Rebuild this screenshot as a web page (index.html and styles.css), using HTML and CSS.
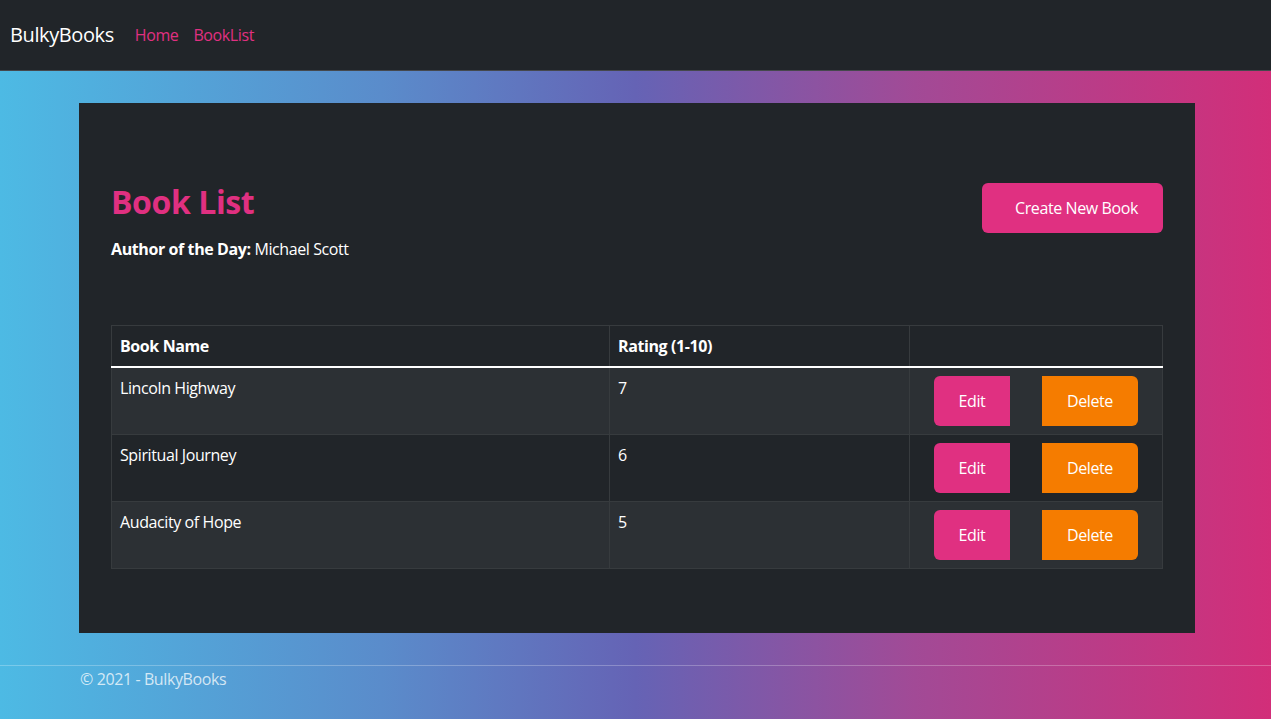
FILE: index.html
```html
<!DOCTYPE html>
<html lang="en">
<head>
<meta charset="utf-8">
<title>Book List - BulkyBooks</title>
<link rel="stylesheet" href="styles.css">
</head>
<body>
<header class="navbar">
  <a class="brand" href="#">BulkyBooks</a>
  <nav class="nav">
    <a class="nav-link" href="#">Home</a>
    <a class="nav-link" href="#">BookList</a>
  </nav>
</header>
<main class="page">
  <section class="card">
    <div class="card-head">
      <div class="titles">
        <h2 class="title">Book List</h2>
        <p class="author"><strong>Author of the Day:</strong> Michael Scott</p>
      </div>
      <a class="btn btn-create" href="#">Create New Book</a>
    </div>
    <table class="table">
      <thead>
        <tr>
          <th class="c-name">Book Name</th>
          <th class="c-rating">Rating (1-10)</th>
          <th class="c-act"></th>
        </tr>
      </thead>
      <tbody>
        <tr class="odd">
          <td>Lincoln Highway</td>
          <td>7</td>
          <td><div class="actions"><a class="btn btn-edit" href="#">Edit</a><a class="btn btn-delete" href="#">Delete</a></div></td>
        </tr>
        <tr>
          <td>Spiritual Journey</td>
          <td>6</td>
          <td><div class="actions"><a class="btn btn-edit" href="#">Edit</a><a class="btn btn-delete" href="#">Delete</a></div></td>
        </tr>
        <tr class="odd">
          <td>Audacity of Hope</td>
          <td>5</td>
          <td><div class="actions"><a class="btn btn-edit" href="#">Edit</a><a class="btn btn-delete" href="#">Delete</a></div></td>
        </tr>
      </tbody>
    </table>
  </section>
</main>
<footer class="footer">
  <div class="footer-inner">&copy; 2021 - BulkyBooks</div>
</footer>
</body>
</html>
```

FILE: styles.css
```css
* { box-sizing: border-box; }
html, body { height: 100%; }
body {
  margin: 0;
  font-family: "Open Sans", "Noto Sans", sans-serif;
  font-size: 16px;
  line-height: 24px;
  letter-spacing: -0.025em;
  color: #fff;
  background: linear-gradient(to right, #4dbae4 0%, #5a8ccb 30%, #6563b5 50%, #a24a96 72%, #d22e79 100%);
  overflow: hidden;
}
a { text-decoration: none; }

.navbar {
  height: 71px;
  background: #212529;
  border-bottom: 1px solid #45484d;
  display: flex;
  align-items: center;
  padding: 0 10px;
}
.brand {
  color: #fff;
  font-size: 20px;
  line-height: 30px;
  margin-right: 13px;
}
.nav { display: flex; }
.nav-link {
  color: #e03081;
  padding: 0 8px;
  font-size: 16px;
}
.nav-link + .nav-link { margin-left: -1px; }

.page {
  padding: 32px 0 0 79px;
  height: 594px;
}
.card {
  width: 1116px;
  height: 530px;
  background: #212529;
  padding: 80px 32px 0 32px;
}
.card-head {
  display: flex;
  justify-content: space-between;
  align-items: flex-start;
  height: 142px;
}
.title {
  margin: 0;
  color: #e03081;
  font-size: 32px;
  line-height: 38px;
  font-weight: 700;
}
.author {
  margin: 16px 0 0;
}
.btn {
  display: inline-flex;
  align-items: center;
  justify-content: center;
  color: #fff;
  height: 50px;
}
.btn-create {
  width: 181px;
  padding-left: 8px;
  background: #e03081;
  border-radius: 6px;
}

.table {
  width: 1052px;
  border-collapse: collapse;
}
.table th, .table td {
  border: 1px solid #373b3e;
  padding: 8px 8px;
  text-align: left;
  vertical-align: top;
}
.table th { font-weight: 700; height: 41px; }
.table thead tr { border-bottom: 2px solid #fff; }
.c-name { width: 498px; }
.c-rating { width: 300px; }
.table tbody td { height: 67px; }
.table tbody tr.odd { background: #2c3034; }
.actions {
  display: flex;
  gap: 32px;
  padding-left: 16px;
}
.btn-edit {
  width: 76px;
  background: #e03081;
  border-radius: 6px 0 0 6px;
}
.btn-delete {
  width: 96px;
  background: #f57c00;
  border-radius: 0 6px 6px 0;
}

.footer {
  border-top: 1px solid rgba(255, 255, 255, 0.25);
  padding-top: 1px;
}
.footer-inner {
  padding-left: 80px;
  color: rgba(255, 255, 255, 0.75);
}
```
